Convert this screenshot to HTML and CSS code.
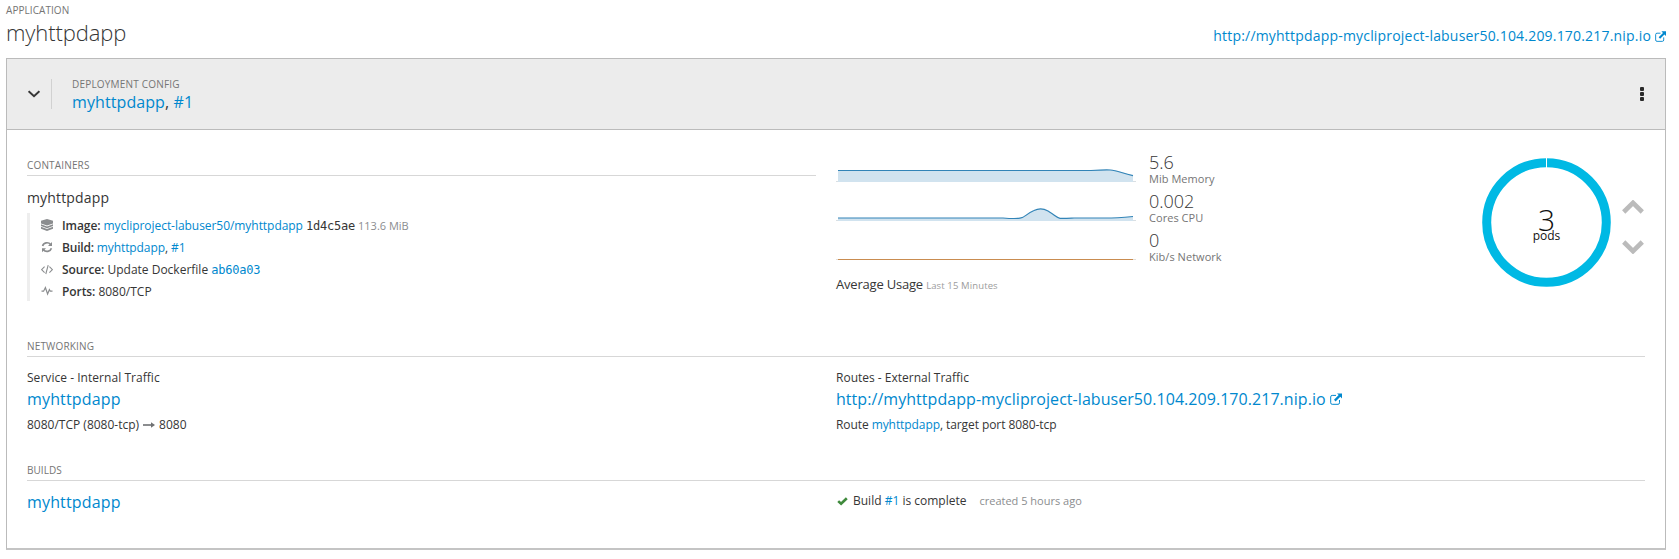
FILE: index.html
```html
<!DOCTYPE html>
<html lang="en">
<head>
<meta charset="utf-8">
<title>myhttpdapp</title>
<link rel="stylesheet" href="styles.css">
</head>
<body>
<svg class="defs" width="0" height="0" aria-hidden="true">
  <symbol id="external" viewBox="0 0 12 12">
    <path d="M6 2.4H2.2Q.7 2.4.7 3.9V9.8Q.7 11.3 2.2 11.3H8Q9.5 11.3 9.5 9.8V7" fill="none" stroke="currentColor" stroke-width="1"/>
    <path d="M7 .4H12V5.4L10.3 3.7L5.6 8.4L4 6.8L8.7 2.1Z" fill="currentColor"/>
  </symbol>
</svg>
<header class="app-head">
  <div>
    <div class="eyebrow">APPLICATION</div>
    <h1 class="app-name">myhttpdapp</h1>
  </div>
  <a class="app-url"><span class="app-url-text">http://myhttpdapp-mycliproject-labuser50.104.209.170.217.nip.io</span><svg class="ext-sm"><use href="#external"/></svg></a>
</header>
<main class="card">
  <div class="card-head">
    <div class="toggle"><svg width="12" height="8" viewBox="0 0 12 8"><path d="M.6 1.2L6 6.2L11.4 1.2" fill="none" stroke="#363636" stroke-width="2"/></svg></div>
    <div class="dc">
      <div class="eyebrow dc-label">DEPLOYMENT CONFIG</div>
      <div class="dc-name"><a>myhttpdapp</a>, <a>#1</a></div>
    </div>
    <svg class="kebab" width="4" height="14" viewBox="0 0 4 14"><g fill="#292929"><rect width="4" height="4" rx="1"/><rect y="5" width="4" height="4" rx="1"/><rect y="10" width="4" height="4" rx="1"/></g></svg>
  </div>
  <div class="card-body">
    <div class="overview">
      <section class="containers">
        <h2 class="eyebrow section-title">CONTAINERS</h2>
        <div class="container-name">myhttpdapp</div>
        <ul class="facts">
          <li><svg class="fi" viewBox="0 0 12 12"><g fill="#8b8d8f"><path d="M6 0L12 1.8V4.4L6 6.6L0 4.4V1.8Z"/><path d="M0 5.2L6 7.4L12 5.2V6.9L6 9.2L0 6.9Z"/><path d="M0 7.8L6 10L12 7.8V9.7L6 12L0 9.7Z"/></g></svg><span class="image-fact"><b>Image:</b> <a>mycliproject-labuser50/myhttpdapp</a> <span class="hash">1d4c5ae</span> <small>113.6 MiB</small></span></li>
          <li><svg class="fi" viewBox="0 0 12 12"><g fill="none" stroke="#8b8d8f" stroke-width="1.7"><path d="M1.6 4.9A4.5 4.2 0 0 1 9.6 3.5"/><path d="M10.4 7.3A4.5 4.2 0 0 1 2.4 8.7"/></g><path d="M11 1V5H7ZM1 11.2V7.2H5Z" fill="#8b8d8f"/></svg><span class="build-fact"><b>Build:</b> <a>myhttpdapp</a>, <a>#1</a></span></li>
          <li><svg class="fi" viewBox="0 0 12 12"><path d="M3.6 3.6L.6 6.6L3.6 9.6M8.4 3.6L11.4 6.6L8.4 9.6M7.2 2.2L4.8 11" fill="none" stroke="#8b8d8f" stroke-width="1.1"/></svg><span class="source-fact"><b>Source:</b> Update Dockerfile <a class="hash">ab60a03</a></span></li>
          <li><svg class="fi" viewBox="0 0 12 12"><path d="M.5 6.2H2.6L4.4 2.6L6.6 9L8.4 4.6L9.3 6.2H11.5" fill="none" stroke="#8b8d8f" stroke-width="1.2"/></svg><span class="ports-fact"><b>Ports:</b> 8080/TCP</span></li>
        </ul>
      </section>
      <section class="metrics">
        <div class="metric">
          <svg class="spark" width="300" height="40" viewBox="0 0 300 40"><path d="M0 29.5H300" stroke="#d9dfe3"/><path d="M2 18.5H262C280 17 277 18 297 23.5V30H2Z" fill="#d1e3ef"/><path d="M2 18.5H255C281 17 275 18 297 23.7" fill="none" stroke="#3284b7" stroke-width="1.2"/></svg>
          <div class="reading"><div class="value">5.6</div><div class="unit unit-mem">Mib Memory</div></div>
        </div>
        <div class="metric">
          <svg class="spark" width="300" height="40" viewBox="0 0 300 40"><path d="M0 29.5H300" stroke="#d9dfe3"/><path d="M2 27H167C193 29 185 25 198 19.5Q205 16 212 20C225 28 218 28 238 27H270Q280 27 297 25.5V30H2Z" fill="#d1e3ef"/><path d="M2 27H167C193 29 185 25 198 19.5Q205 16 212 20C225 28 218 28 238 27H270Q280 27 297 25.5" fill="none" stroke="#3284b7" stroke-width="1.2"/></svg>
          <div class="reading"><div class="value">0.002</div><div class="unit unit-cpu">Cores CPU</div></div>
        </div>
        <div class="metric">
          <svg class="spark" width="300" height="40" viewBox="0 0 300 40"><path d="M0 29.5H300" stroke="#e3dfda"/><path d="M2 29.5H297" stroke="#c98c50"/></svg>
          <div class="reading"><div class="value">0</div><div class="unit unit-net">Kib/s Network</div></div>
        </div>
        <div class="usage"><span class="usage-text">Average Usage</span> <span class="usage-range">Last 15 Minutes</span></div>
      </section>
      <section class="pods">
        <div class="donut">
          <svg class="ring" width="129" height="129" viewBox="0 0 129 129"><circle cx="64.5" cy="64.5" r="59.8" fill="none" stroke="#00b9e4" stroke-width="9"/><path d="M64.5 0V10" stroke="#fff"/></svg>
          <div class="donut-text"><div class="pod-count">3</div><div class="pod-label">pods</div></div>
        </div>
        <div class="scale">
          <svg width="22" height="14" viewBox="0 0 22 14"><path d="M1.7 12L11 2.8L20.3 12" fill="none" stroke="#bbb" stroke-width="4.6"/></svg>
          <svg width="22" height="14" viewBox="0 0 22 14"><path d="M1.7 2L11 11.2L20.3 2" fill="none" stroke="#bbb" stroke-width="4.6"/></svg>
        </div>
      </section>
    </div>
    <section class="networking">
      <h2 class="eyebrow section-title net-title">NETWORKING</h2>
      <div class="cols">
        <div>
          <div class="text svc-label">Service - Internal Traffic</div>
          <div class="big"><a>myhttpdapp</a></div>
          <div class="text detail"><span class="svc-port">8080/TCP (8080-tcp)</span><svg class="arrow" width="12" height="6" viewBox="0 0 12 6"><path d="M0 3H9" stroke="#6f7173" stroke-width="1.6"/><path d="M8 .3L12 3L8 5.7Z" fill="#6f7173"/></svg><span class="port">8080</span></div>
        </div>
        <div>
          <div class="text route-label">Routes - External Traffic</div>
          <div class="big route"><a><span class="route-url">http://myhttpdapp-mycliproject-labuser50.104.209.170.217.nip.io</span><svg class="ext-lg"><use href="#external"/></svg></a></div>
          <div class="text detail route-detail"><span>Route <a>myhttpdapp</a>, target port 8080-tcp</span></div>
        </div>
      </div>
    </section>
    <section class="builds">
      <h2 class="eyebrow section-title build-title">BUILDS</h2>
      <div class="cols">
        <div class="big build-name"><a>myhttpdapp</a></div>
        <div class="text build-row"><svg width="11" height="9" viewBox="0 0 11 9"><path d="M1.2 4.1L4.1 6.8L9.8 1.2" fill="none" stroke="#3f8a3c" stroke-width="2.6"/></svg><span class="build-status">Build <a>#1</a> is complete</span><span class="created">created 5 hours ago</span></div>
      </div>
    </section>
  </div>
</main>
</body>
</html>
```

FILE: styles.css
```css
* { box-sizing: border-box; }
body { margin: 0; padding: 0 13px 0 6px; background: #fff; color: #363636; font: 12px/20px "Open Sans", sans-serif; overflow: hidden; }
h1, h2, ul { margin: 0; padding: 0; font-weight: 400; list-style: none; }
a { color: #0088ce; }
svg { display: block; flex: none; }
.defs { position: absolute; }
.eyebrow { font-size: 10px; line-height: 14px; letter-spacing: .06px; color: #757575; white-space: nowrap; }
.app-head { display: flex; justify-content: space-between; height: 58px; padding-top: 3px; }
.app-name { font-size: 22px; font-weight: 300; line-height: 30px; letter-spacing: -.1px; }
.app-url { display: flex; align-items: center; gap: 4px; height: 20px; margin-top: 23px; font-size: 14px; letter-spacing: .19px; }
.ext-sm { width: 11px; height: 11px; }
.card { height: 492px; border: 1px solid #bbb; border-bottom-width: 2px; border-bottom-color: #c4c4c4; }
.card-head { display: flex; height: 71px; padding: 20px 21px 0; background: #ececec; border-bottom: 1px solid #bbb; }
.toggle { width: 24px; height: 30px; padding-top: 11px; border-right: 1px solid #d1d1d1; }
.dc { flex: 1; margin-left: 20px; margin-top: -2px; }
.dc-label { letter-spacing: .2px; }
.dc-name { font-size: 16px; line-height: 22px; letter-spacing: .09px; }
.kebab { margin-top: 8px; }
.card-body { padding: 0 20px; }
.overview { display: flex; height: 209px; padding-top: 28px; }
.containers { width: 789px; }
.section-title { height: 18px; border-bottom: 1px solid #d7d7d7; }
.net-title, .containers .section-title { letter-spacing: .16px; }
.container-name { margin-top: 12px; font-size: 14px; line-height: 20px; letter-spacing: .16px; }
.facts { margin-top: 5px; padding-top: 2px; height: 88px; border-left: 3px solid #eee; }
.facts li { display: flex; align-items: center; height: 22px; padding-left: 11px; gap: 9px; white-space: nowrap; }
.fi { width: 12px; height: 12px; margin-top: -2px; }
.facts b { font-weight: 600; letter-spacing: -.08px; }
.image-fact { letter-spacing: -.05px; }
.build-fact { letter-spacing: -.1px; }
.build-fact b { letter-spacing: -.2px; }
.build-fact a + a { letter-spacing: 0; }
.hash { font-family: "DejaVu Sans Mono", monospace; font-size: 12px; line-height: 16px; letter-spacing: -.23px; }
.facts small { font-size: 11px; letter-spacing: 0; color: #8b8d8f; }
.metrics { width: 420px; margin-left: 20px; margin-top: -6px; }
.metric { display: flex; gap: 13px; height: 39px; }
.reading { padding-top: 1px; }
.value { font-size: 18px; font-weight: 300; line-height: 19px; }
.unit { font-size: 11px; line-height: 14px; letter-spacing: .04px; color: #757575; }
.usage { font-size: 13px; margin-top: 5px; letter-spacing: -.2px; }
.usage-range { font-size: 9.5px; letter-spacing: .12px; color: #9c9c9c; }
.pods { display: flex; margin-left: 226px; }
.donut { display: grid; width: 129px; height: 129px; }
.ring, .donut-text { grid-area: 1 / 1; }
.donut-text { text-align: center; color: #111; padding-top: 42px; }
.pod-count { font-size: 30px; font-weight: 300; line-height: 40px; height: 27px; }
.pod-label { font-size: 12px; line-height: 18px; }
.scale { display: flex; flex-direction: column; gap: 26px; margin-left: 11px; padding-top: 42px; }
.cols { display: grid; grid-template-columns: 809px 1fr; }
.networking { height: 124px; }
.text { font-size: 12px; line-height: 20px; }
.big { font-size: 16px; line-height: 22px; letter-spacing: .15px; }
.big.route { letter-spacing: .05px; }
.svc-label, .route-label { margin-top: 11px; }
.svc-label { letter-spacing: .04px; }
.detail { display: flex; align-items: center; margin-top: 5px; gap: 4px; }
.route-detail { letter-spacing: -.08px; }
.route a { display: flex; align-items: center; gap: 4px; }
.ext-lg { width: 12px; height: 12px; }
.build-name { margin-top: 10px; }
.build-row { display: flex; align-items: center; height: 20px; margin-top: 10px; padding-left: 1px; }
.build-status { margin-left: 5px; }
.created { margin-left: 13px; font-size: 11px; color: #8b8d8f; }
```
